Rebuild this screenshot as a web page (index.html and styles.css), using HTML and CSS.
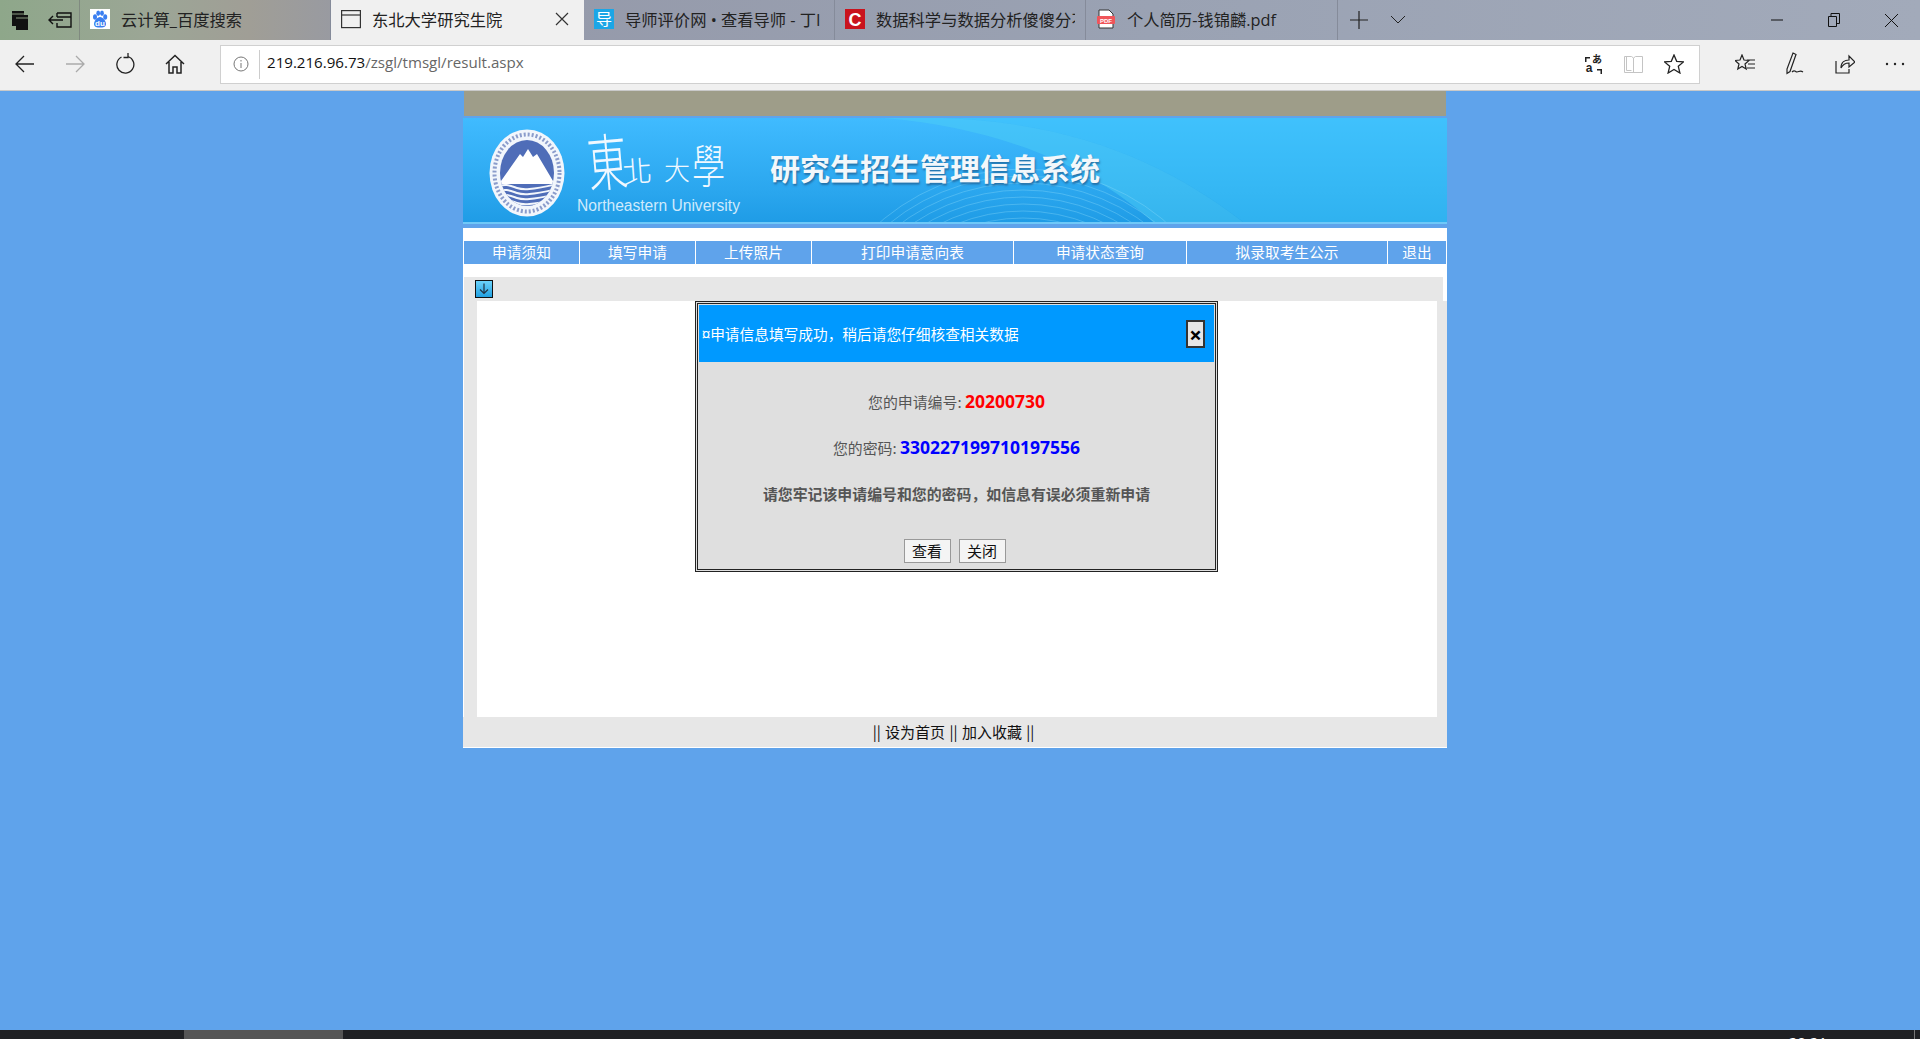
FILE: index.html
```html
<!DOCTYPE html>
<html>
<head>
  <meta charset="utf-8" />
  <title>东北大学研究生院</title>
  <link rel="stylesheet" href="styles.css">
</head>
<body>
  <div class="tabbar">
    <div class="tab-tools">
      <svg class="ico" width="24" height="24" viewBox="0 0 24 24"><path d="M4 3h12v4h4v15H8v-4H4z" fill="#111"/><path d="M4 6h12M8 10h12" stroke="#8a9a80" stroke-width="1"/></svg>
      <svg class="ico" width="28" height="24" viewBox="0 0 28 24" fill="none" stroke="#111" stroke-width="1.4"><path d="M9 5h14v14H9v-4M9 9V5M1 12h14M5 8l-4 4 4 4M9 9h14"/></svg>
    </div>
    <div class="tab">
      <svg class="fav" width="20" height="20" viewBox="0 0 20 20"><rect width="20" height="20" fill="#fff"/><g fill="#3b7ff0"><ellipse cx="5" cy="8" rx="2" ry="2.8"/><ellipse cx="8.2" cy="4.2" rx="1.9" ry="2.7"/><ellipse cx="12" cy="4.2" rx="1.9" ry="2.7"/><ellipse cx="15.2" cy="8" rx="2" ry="2.8"/><path d="M10 8c3 0 6 4 6 7 0 3-3 3.500-6 3.500S4 18 4 15c0-3 3-7 6-7z"/></g><text x="10" y="17" class="fav-du">du</text></svg>
      <span class="tab-title">云计算_百度搜索</span>
    </div>
    <div class="tab active">
      <svg class="fav" width="20" height="20" viewBox="0 0 20 20" fill="none" stroke="#333" stroke-width="1.2"><rect x=".6" y="1.600" width="18.800" height="17"/><path d="M1 6h18"/></svg>
      <span class="tab-title">东北大学研究生院</span>
      <svg class="tab-close" width="14" height="14" viewBox="0 0 14 14" stroke="#333" stroke-width="1.200"><path d="M1 1l12 12M13 1L1 13"/></svg>
    </div>
    <div class="tab">
      <svg class="fav" width="20" height="20" viewBox="0 0 20 20"><rect width="20" height="20" fill="#1ba6e6"/><text x="10" y="16" class="fav-dao">导</text></svg>
      <span class="tab-title">导师评价网 • 查看导师 - 丁I</span>
    </div>
    <div class="tab">
      <svg class="fav" width="20" height="20" viewBox="0 0 20 20"><rect width="20" height="20" fill="#c9131d"/><text x="10" y="16.500" class="fav-c">C</text></svg>
      <span class="tab-title">数据科学与数据分析傻傻分不</span>
    </div>
    <div class="tab last">
      <svg class="fav" width="20" height="20" viewBox="0 0 20 20"><path d="M3 1h10l4 4v14H3z" fill="#fff" stroke="#333"/><rect x="1" y="7" width="18" height="8" rx="1" fill="#f0555a"/><text x="10" y="13.500" class="fav-pdf">PDF</text></svg>
      <span class="tab-title">个人简历-钱锦麟.pdf</span>
    </div>
    <div class="tab-new">
      <svg width="18" height="18" viewBox="0 0 18 18" stroke="#222" stroke-width="1.200"><path d="M9 0v18M0 9h18"/></svg>
      <svg width="16" height="10" viewBox="0 0 16 10" fill="none" stroke="#222"><path d="M1 1l7 7 7-7"/></svg>
    </div>
    <div class="win-btns">
      <svg width="12" height="12" viewBox="0 0 12 12" stroke="#111"><path d="M0 6h12"/></svg>
      <svg width="12" height="14" viewBox="0 0 12 14" fill="none" stroke="#111"><path d="M.5 3.500h8v10h-8zM3 3.500V.5h8.500v10H8.500"/></svg>
      <svg width="13" height="13" viewBox="0 0 13 13" stroke="#111"><path d="M0 0l13 13M13 0L0 13"/></svg>
    </div>
  </div>

  <div class="toolbar">
    <div class="nav-btns">
      <svg width="20" height="18" viewBox="0 0 20 18" fill="none" stroke="#222" stroke-width="1.300"><path d="M19 9H1M9 1L1 9l8 8"/></svg>
      <svg width="20" height="18" viewBox="0 0 20 18" fill="none" stroke="#aaa" stroke-width="1.300"><path d="M1 9h18M11 1l8 8-8 8"/></svg>
      <svg width="20" height="22" viewBox="0 0 20 22" fill="none" stroke="#222" stroke-width="1.300"><path d="M6.500 4A8.500 8.500 0 1 0 13 3.500M13 0v4.500H8.500" /></svg>
      <svg width="20" height="20" viewBox="0 0 20 20" fill="none" stroke="#222" stroke-width="1.500"><path d="M1 10l9-8.500L19 10M4 8v11h4v-6h4v6h4V8"/></svg>
    </div>
    <div class="address">
      <svg class="info" width="16" height="16" viewBox="0 0 16 16" fill="none" stroke="#777"><circle cx="8" cy="8" r="7"/><path d="M8 7v5M8 4v1.500"/></svg>
      <div class="url"><span class="url-text"><span class="host">219.216.96.73</span>/zsgl/tmsgl/result.aspx</span></div>
      <div class="addr-icons">
        <svg width="18" height="22" viewBox="0 0 18 22"><path d="M0 4h5v1.500H1.500V9H0zM17 16h-5v1.500h3.500V21H17z" fill="#222"/><text x="12" y="10" class="ico-kana">あ</text><text x="4" y="19" class="ico-a">a</text></svg>
        <svg width="19" height="20" viewBox="0 0 19 20" fill="none" stroke="#c4c4c4"><path d="M.5 2.500h7l2 1.500 2-1.500h7v16h-18zM9.500 4v14.500M2.500 2.500v14h5"/></svg>
        <svg width="20" height="20" viewBox="0 0 20 20" fill="none" stroke="#222" stroke-width="1.300"><path d="M10 1l2.700 6.300 6.800.6-5.200 4.400 1.600 6.700L10 15.400 4.100 19l1.600-6.700L.5 7.900l6.800-.6z"/></svg>
      </div>
    </div>
    <div class="tool-icons">
      <svg width="20" height="20" viewBox="0 0 20 20" fill="none" stroke="#222" stroke-width="1.200"><path d="M7 1l2 5 5 .5-4 3.500 1.200 5L7 12.500 2.800 15 4 10 0 6.500 5 6zM12 6h8M13 10h7M12 14h8"/></svg>
      <svg width="20" height="24" viewBox="0 0 20 24" fill="none" stroke="#222" stroke-width="1.200"><path d="M8 1l3 1.500-6 17-3 2V17zM7 20c3-3 3 0 5 0s3-2 6 0"/></svg>
      <svg width="20" height="20" viewBox="0 0 20 20" fill="none" stroke="#222" stroke-width="1.200"><path d="M1 7v12h13v-4M6 14c0-6 4-8 8-8V2l6 6-6 5V9c-3 0-6 1-8 5z"/></svg>
      <svg width="20" height="4" viewBox="0 0 20 4" fill="#222"><circle cx="2" cy="2" r="1.200"/><circle cx="10" cy="2" r="1.200"/><circle cx="18" cy="2" r="1.200"/></svg>
    </div>
  </div>

  <div class="main">
    <div class="wrap">
      <div class="topband"></div>
      <div class="banner">
        <svg class="banner-bg" width="984" height="104" viewBox="0 0 984 104">
          <path d="M480 0C620 5 710 50 780 104H984V0z" fill="#3fc8fa" opacity=".5"/>
          <path d="M420 0C540 10 630 50 690 104H780C710 50 620 5 480 0z" fill="#4ccdf5" opacity=".5"/>
          <g fill="none" stroke="#8fdcfa" stroke-opacity=".35">
            <circle cx="560" cy="270" r="170"/>
            <circle cx="560" cy="270" r="177"/>
            <circle cx="560" cy="270" r="184"/>
            <circle cx="560" cy="270" r="191"/>
            <circle cx="560" cy="270" r="198"/>
            <circle cx="560" cy="270" r="205"/>
            <circle cx="560" cy="270" r="212"/>
            <circle cx="560" cy="270" r="219"/>
          </g>
        </svg>
        <svg class="seal" width="76" height="88" viewBox="0 0 76 88">
          <defs><clipPath id="inner"><ellipse cx="38" cy="44" rx="27" ry="33"/></clipPath></defs>
          <ellipse cx="38" cy="44" rx="37.500" ry="43.500" fill="#f2f6fc"/>
          <ellipse cx="38" cy="44" rx="32.500" ry="38.500" fill="none" stroke="#8b9ccb" stroke-width="4" stroke-dasharray="2 2"/>
          <ellipse cx="38" cy="44" rx="27" ry="33" fill="#4f6db8"/>
          <g clip-path="url(#inner)">
            <path d="M12 52l19-27 3 3 5-8 5 8 4-3 16 27v3H12z" fill="#fff"/>
            <g fill="none" stroke="#f2f6fc" stroke-width="2">
              <path d="M8 58c8-4 14-1 20 1s14 2 40-4"/>
              <path d="M8 63c8-4 14-1 20 1s14 2 40-4"/>
              <path d="M8 68c8-4 14-1 20 1s14 2 40-4"/>
              <path d="M8 73c8-4 14-1 20 1s14 2 40-4"/>
            </g>
          </g>
        </svg>
        <div class="uni">
          <div class="uni-cn"><span class="uni-big">東</span><span class="uni-small">北</span><span class="uni-mid">大</span><span class="uni-xue">學</span></div>
          <div class="uni-en">Northeastern University</div>
        </div>
        <div class="sys-title">研究生招生管理信息系统</div>
      </div>
      <div class="under-banner">
        <div class="menu">
          <a class="menu-item">申请须知</a>
          <a class="menu-item">填写申请</a>
          <a class="menu-item">上传照片</a>
          <a class="menu-item">打印申请意向表</a>
          <a class="menu-item">申请状态查询</a>
          <a class="menu-item">拟录取考生公示</a>
          <a class="menu-item">退出</a>
        </div>
        <div class="panel-head">
          <svg width="18" height="18" viewBox="0 0 18 18"><defs><linearGradient id="dl" x1="0" y1="0" x2="0" y2="1"><stop offset="0" stop-color="#6fd4fb"/><stop offset="1" stop-color="#1f9fe0"/></linearGradient></defs><rect x=".5" y=".5" width="17" height="17" fill="url(#dl)" stroke="#111"/><path d="M9 3.500v10M5 9.500l4 4 4-4" fill="none" stroke="#234" stroke-width="1.200"/></svg>
        </div>
        <div class="panel-body">
          <div class="content">
            <div class="dialog">
              <div class="dialog-head">
                <span>¤申请信息填写成功&#65292;稍后请您仔细核查相关数据</span>
                <button type="button" class="dialog-x">×</button>
              </div>
              <div class="dialog-body">
                <p>您的申请编号: <b class="num red">20200730</b></p>
                <p>您的密码: <b class="num blue">330227199710197556</b></p>
                <p class="warn">请您牢记该申请编号和您的密码&#65292;如信息有误必须重新申请</p>
                <div class="dialog-btns">
                  <button type="button" class="btn">查看</button>
                  <button type="button" class="btn">关闭</button>
                </div>
              </div>
            </div>
          </div>
        </div>
        <div class="foot">|| 设为首页 || 加入收藏 ||</div>
      </div>
    </div>
  </div>

  <div class="taskbar">
    <div class="task-active"></div>
    <div class="clock">20:21</div>
    <div class="task-edge"></div>
  </div>
</body>
</html>
```

FILE: styles.css
```css
* {
  box-sizing: border-box;
}
html, body {
  height: 100%;
}
body {
  margin: 0;
  display: flex;
  flex-direction: column;
  overflow: hidden;
  background-color: #5fa3eb;
  font-family: "Noto Sans CJK SC", "Open Sans", sans-serif;
  font-size: 15px;
  color: #333;
}
svg {
  display: block;
  flex: none;
}

/* browser chrome */
.tabbar {
  display: flex;
  height: 40px;
  background: linear-gradient(90deg, #8ea78a 0, #9ca696 8%, #a09e96 13%, #9498a8 20%, #9aa2b3 60%, #a2aaba 100%);
}
.tab-tools {
  display: flex;
  align-items: center;
  gap: 16px;
  width: 80px;
  padding-left: 8px;
  border-right: 1px solid #808a80;
}
.tab {
  display: flex;
  align-items: center;
  gap: 11px;
  width: 251px;
  padding: 0 10px 2px;
  border-right: 1px solid #858b9a;
  color: #222;
  font-family: "Open Sans", "Noto Sans CJK SC", sans-serif;
  font-size: 16.300px;
  white-space: nowrap;
}
.tab.active {
  width: 253px;
  background-color: #f0f0f0;
  border-right: none;
}
.tab.last {
  width: 252px;
}
.tab-title {
  flex: 1;
  overflow: hidden;
}
.tab-close {
  margin-right: 5px;
}
.fav-du {
  font: bold 8px "Liberation Sans", sans-serif;
  fill: #fff;
  text-anchor: middle;
}
.fav-dao {
  font: 16px "Noto Sans CJK SC", sans-serif;
  fill: #fff;
  text-anchor: middle;
}
.fav-c {
  font: bold 18px "Liberation Sans", sans-serif;
  fill: #fff;
  text-anchor: middle;
}
.fav-pdf {
  font: bold 6px "Liberation Sans", sans-serif;
  fill: #fff;
  text-anchor: middle;
}
.ico-kana {
  font: bold 10px "Noto Sans CJK JP", sans-serif;
  fill: #222;
  text-anchor: middle;
}
.ico-a {
  font: bold 12px "Liberation Sans", sans-serif;
  fill: #222;
  text-anchor: middle;
}
.tab-new {
  display: flex;
  align-items: center;
  gap: 22px;
  padding-left: 12px;
}
.win-btns {
  display: flex;
  align-items: center;
  gap: 45px;
  margin-left: auto;
  padding-right: 22px;
}

.toolbar {
  display: flex;
  align-items: center;
  height: 51px;
  padding-bottom: 2px;
  background-color: #f0f0f0;
  border-bottom: 1px solid #c9c9c9;
}
.nav-btns {
  display: flex;
  align-items: center;
  gap: 30px;
  width: 220px;
  padding-left: 15px;
}
.address {
  display: flex;
  align-items: center;
  width: 1480px;
  height: 39px;
  background-color: #fff;
  border: 1px solid #d0d0d0;
}
.info {
  margin-left: 12px;
}
.url {
  flex: 1;
  margin-left: 10px;
  padding-left: 7px;
  height: 29px;
  border-left: 1px solid #ccc;
  font-family: "Open Sans", sans-serif;
  font-size: 15.100px;
  line-height: 24px;
  color: #666;
}
.host {
  color: #111;
}
.addr-icons {
  display: flex;
  align-items: center;
  gap: 21px;
  padding-right: 15px;
}
.tool-icons {
  display: flex;
  align-items: center;
  gap: 30px;
  padding-left: 35px;
}

/* page */
.main {
  flex: 1;
  padding-right: 10px;
}
.wrap {
  width: 984px;
  margin: 0 auto;
}
.topband {
  height: 25px;
  margin: 0 1px;
  background-color: #9e9d89;
}
.banner {
  position: relative;
  display: flex;
  align-items: flex-start;
  height: 106px;
  margin: 2px 0 4px;
  padding: 11px 0 0 26px;
  overflow: hidden;
  background: linear-gradient(180deg, #40bbff 0, #2aa6ee 70%, #1f9ce6 98%, #6fc8f8 98%);
}
.banner-bg {
  position: absolute;
  left: 0;
  top: 0;
}
.seal {
  position: relative;
}
.uni {
  position: relative;
  width: 162px;
  margin-left: 12px;
  color: #f0f8ff;
}
.uni-cn {
  display: flex;
  align-items: center;
  height: 64px;
  margin-top: -2px;
  padding-left: 3px;
  font-family: "Noto Sans CJK TC", sans-serif;
  font-weight: 300;
  line-height: 1;
}
.uni-big {
  width: 42px;
  font-size: 62px;
  transform: rotate(-5deg) scaleX(.64);
  transform-origin: 20px 50%;
}
.uni-small {
  width: 42px;
  font-size: 30px;
  transform: translateY(10px) rotate(-4deg);
}
.uni-mid {
  width: 28px;
  font-size: 26px;
  transform: translateY(10px);
}
.uni-xue {
  font-size: 46px;
  transform: translateY(4px) scaleX(.72);
  transform-origin: left;
}
.uni-en {
  margin-top: 5px;
  font-family: "Liberation Sans", sans-serif;
  font-size: 15.600px;
  line-height: 20px;
  white-space: nowrap;
  color: #cfeafc;
}
.sys-title {
  position: relative;
  margin: 16px 0 0 31px;
  font-size: 30px;
  font-weight: bold;
  line-height: 44px;
  color: #f2f7fb;
  text-shadow: 1px 2px 2px rgba(30, 90, 140, .7);
}

.under-banner {
  background-color: #fff;
  padding-bottom: 1px;
}
.menu {
  display: grid;
  grid-template-columns: 115px 115px 115px 201px 172px 200px 58px;
  gap: 1px;
  margin: 0 1px;
  padding: 13px 0;
}
.menu-item {
  height: 23px;
  line-height: 22px;
  text-align: center;
  background-color: #5fa3eb;
  color: #fff;
  font-size: 14.700px;
}
.panel-head {
  height: 24px;
  margin: 0 4px 0 1px;
  padding: 3px 0 0 11px;
  background-color: #e7e7e7;
}
.panel-body {
  margin-left: 1px;
  padding: 0 10px 0 13px;
  background-color: #e7e7e7;
}
.content {
  position: relative;
  height: 416px;
  background-color: #fff;
}
.foot {
  height: 30px;
  padding-right: 3px;
  line-height: 30px;
  text-align: center;
  word-spacing: 1px;
  background-color: #e7e7e7;
  color: #111;
  font-size: 15px;
}

/* dialog */
.dialog {
  position: absolute;
  left: 218px;
  top: 0;
  width: 523px;
  height: 271px;
  padding: 1px;
  border: 3px double #222;
  background-color: #dfdfdf;
}
.dialog-head {
  display: flex;
  align-items: center;
  justify-content: space-between;
  height: 57px;
  padding: 0 9px 0 3px;
  background-color: #0099ff;
  color: #fff;
  font-size: 14.700px;
}
.dialog-x {
  width: 19px;
  height: 28px;
  padding: 0;
  border: 2px solid #333;
  background-color: #e6e6e6;
  color: #000;
  font-family: "Open Sans", sans-serif;
  font-size: 22px;
  font-weight: bold;
  line-height: 22px;
}
.dialog-body {
  text-align: center;
  font-size: 14.900px;
  color: #555;
}
.dialog-body p {
  height: 46px;
  margin: 0;
  line-height: 45px;
}
.dialog-body p:first-child {
  margin-top: 17px;
}
.num {
  font-family: "Open Sans", sans-serif;
  font-size: 17.500px;
}
.red {
  color: #ff0000;
}
.blue {
  color: #0000ff;
}
.warn {
  font-weight: bold;
}
.dialog-btns {
  display: flex;
  justify-content: center;
  gap: 8px;
  margin-top: 22px;
  padding-right: 4px;
}
.btn {
  width: 47px;
  height: 24px;
  padding: 0;
  border: 1px solid #999;
  background-color: #f4f4f4;
  color: #111;
  font-family: "Noto Sans CJK SC", sans-serif;
  font-size: 15px;
  line-height: 20px;
}

/* taskbar, cut off by the bottom of the window */
.taskbar {
  display: flex;
  height: 9px;
  overflow: hidden;
  background-color: #1f2023;
}
.task-active {
  width: 159px;
  margin-left: 184px;
  background-color: #555;
}
.clock {
  margin-left: auto;
  margin-right: 87px;
  padding-top: 2px;
  color: #fff;
  font-family: "Open Sans", sans-serif;
  font-size: 15px;
  line-height: 20px;
}
.task-edge {
  width: 1px;
  margin-right: 5px;
  background-color: #777;
}
```
